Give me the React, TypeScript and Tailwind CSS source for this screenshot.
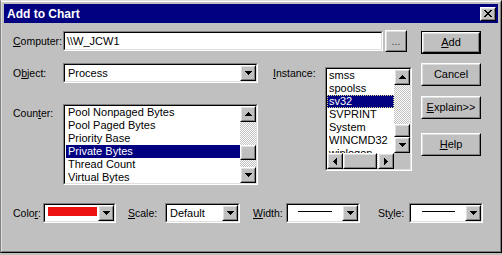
import React from "react";

const Down = () => (
  <svg width="7" height="4" viewBox="0 0 7 4" shapeRendering="crispEdges">
    <path d="M0 0h7v1H0z M1 1h5v1H1z M2 2h3v1H2z M3 3h1v1H3z" fill="#000" />
  </svg>
);
const Up = () => (
  <svg width="7" height="4" viewBox="0 0 7 4" shapeRendering="crispEdges">
    <path d="M3 0h1v1H3z M2 1h3v1H2z M1 2h5v1H1z M0 3h7v1H0z" fill="#000" />
  </svg>
);
const Left = () => (
  <svg width="4" height="7" viewBox="0 0 4 7" shapeRendering="crispEdges">
    <path d="M0 3h1v1H0z M1 2h1v3H1z M2 1h1v5H2z M3 0h1v7H3z" fill="#000" />
  </svg>
);
const Right = () => (
  <svg width="4" height="7" viewBox="0 0 4 7" shapeRendering="crispEdges">
    <path d="M0 0h1v7H0z M1 1h1v5H1z M2 2h1v3H2z M3 3h1v1H3z" fill="#000" />
  </svg>
);
const CloseX = () => (
  <svg width="8" height="7" viewBox="0 0 8 7" shapeRendering="crispEdges">
    <path
      d="M0 0h2v1H0z M6 0h2v1H6z M1 1h2v1H1z M5 1h2v1H5z M2 2h4v1H2z M3 3h2v1H3z M2 4h4v1H2z M1 5h2v1H1z M5 5h2v1H5z M0 6h2v1H0z M6 6h2v1H6z"
      fill="#000"
    />
  </svg>
);

type P = { className?: string; innerClassName?: string; children?: React.ReactNode };

function Raised({ className = "", innerClassName = "", children }: P) {
  return (
    <div className={`flex shrink-0 border border-t-white border-l-white border-r-black border-b-black bg-[#c0c0c0] ${className}`}>
      <div className={`flex flex-1 items-center justify-center border border-t-[#dfdfdf] border-l-[#dfdfdf] border-r-[#808080] border-b-[#808080] ${innerClassName}`}>
        {children}
      </div>
    </div>
  );
}

function Sunken({ className = "", innerClassName = "", children }: P) {
  return (
    <div className={`flex shrink-0 border border-t-[#808080] border-l-[#808080] border-r-white border-b-white ${className}`}>
      <div className={`flex flex-1 min-w-0 min-h-0 border border-t-black border-l-black border-r-[#dfdfdf] border-b-[#dfdfdf] bg-white ${innerClassName}`}>
        {children}
      </div>
    </div>
  );
}

function Combo({ className = "", contentClassName = "", children }: P & { contentClassName?: string }) {
  return (
    <Sunken className={className}>
      <div className={`flex flex-1 min-w-0 ${contentClassName}`}>{children}</div>
      <Raised className="w-[16px]">
        <Down />
      </Raised>
    </Sunken>
  );
}

function VScroll({ thumbClass }: { thumbClass: string }) {
  return (
    <div className="flex w-[16px] shrink-0 flex-col">
      <Raised className="h-[16px]">
        <Up />
      </Raised>
      <div className="flex flex-1 flex-col bg-[image:repeating-conic-gradient(#c0c0c0_0_25%,#ffffff_0_50%)] bg-[length:2px_2px]">
        <Raised className={thumbClass} />
      </div>
      <Raised className="h-[16px]">
        <Down />
      </Raised>
    </div>
  );
}

const U = ({ children }: { children: React.ReactNode }) => <span className="underline underline-offset-[1px]">{children}</span>;

const counters = ["Pool Nonpaged Bytes", "Pool Paged Bytes", "Priority Base", "Private Bytes", "Thread Count", "Virtual Bytes"];
const instances = ["smss", "spoolss", "sv32", "SVPRINT", "System", "WINCMD32", "winlogon"];

export default function App() {
  return (
    <div className="w-[502px] h-[255px] overflow-hidden bg-[#c0c0c0] font-['Liberation_Sans',Arial,sans-serif] text-[10.5px] leading-[13px] text-black">
      <div className="flex h-[253px] flex-col border border-t-[#dfdfdf] border-l-[#808080] border-r-black border-b-black">
        <div className="flex flex-1 flex-col border border-t-white border-l-[#dfdfdf] border-r-[#808080] border-b-[#808080] p-[2px]">
          {/* Title bar */}
          <div className="flex h-[19px] shrink-0 items-center justify-between bg-[#000080] pl-[3px] pr-[2px]">
            <span className="text-[12px] font-bold leading-none text-white">Add to Chart</span>
            <Raised className="h-[14px] w-[16px]">
              <CloseX />
            </Raised>
          </div>

          {/* Content */}
          <div className="flex flex-col pl-[8px] pt-[7px]">
            <div className="flex">
              {/* left column */}
              <div className="flex w-[400px] flex-col">
                <div className="flex h-[22px] items-center">
                  <span className="w-[51px] pl-[1px]">
                    <U>C</U>omputer:
                  </span>
                  <Sunken className="h-[20px] w-[320px]" innerClassName="items-center pl-[2px] text-[11px]">
                    {"\\\\W_JCW1"}
                  </Sunken>
                  <Raised className="ml-[2px] h-[22px] w-[22px]" innerClassName="items-end pb-[4px]">
                    <span className="leading-none text-[#404040]">...</span>
                  </Raised>
                </div>

                <div className="mt-[11px] flex">
                  <div className="flex w-[246px] flex-col">
                    <div className="flex h-[20px] items-center">
                      <span className="w-[51px] pl-[1px]">
                        O<U>b</U>ject:
                      </span>
                      <Combo className="h-[20px] w-[195px]" contentClassName="items-center pl-[3px] text-[11px]">
                        Process
                      </Combo>
                    </div>
                    <div className="mt-[21px] flex">
                      <span className="w-[51px] pl-[1px] pt-[3px]">
                        Coun<U>t</U>er:
                      </span>
                      <Sunken className="h-[81px] w-[195px]">
                        <div className="flex flex-1 flex-col overflow-hidden pl-[1px] text-[11px]">
                          {counters.map((c) => (
                            <div
                              key={c}
                              className={`h-[13px] shrink-0 whitespace-nowrap px-[2px] ${c === "Private Bytes" ? "bg-[#000080] text-white" : ""}`}
                            >
                              {c}
                            </div>
                          ))}
                        </div>
                        <VScroll thumbClass="mt-[23px] h-[15px]" />
                      </Sunken>
                    </div>
                  </div>

                  <div className="ml-[15px] flex">
                    <span className="flex h-[20px] w-[52px] items-center">
                      <U>I</U>nstance:
                    </span>
                    <Sunken className="mt-[4px] h-[104px] w-[87px]" innerClassName="flex-col">
                      <div className="flex min-h-0 flex-1">
                        <div className="flex min-w-0 flex-1 flex-col overflow-hidden text-[11px]">
                          {instances.map((c) =>
                            c === "sv32" ? (
                              <div
                                key={c}
                                className="h-[13px] shrink-0 whitespace-nowrap border border-dotted border-[#d8d890] bg-[#000080] pl-[1px] leading-[11px] text-white"
                              >
                                {c}
                              </div>
                            ) : (
                              <div key={c} className="h-[13px] shrink-0 whitespace-nowrap pl-[2px]">
                                {c}
                              </div>
                            )
                          )}
                        </div>
                        <VScroll thumbClass="mt-auto h-[13px]" />
                      </div>
                      <div className="flex h-[16px] shrink-0">
                        <Raised className="w-[16px]">
                          <Left />
                        </Raised>
                        <div className="flex flex-1 bg-[image:repeating-conic-gradient(#c0c0c0_0_25%,#ffffff_0_50%)] bg-[length:2px_2px]">
                          <Raised className="w-[34px]" />
                        </div>
                        <Raised className="w-[16px]">
                          <Right />
                        </Raised>
                        <div className="w-[16px] bg-[#c0c0c0]" />
                      </div>
                    </Sunken>
                  </div>
                </div>
              </div>

              {/* right column buttons */}
              <div className="ml-[9px] flex w-[60px] flex-col pt-[1px] text-[11px]">
                <div className="flex h-[23px] border border-black">
                  <Raised className="flex-1">
                    <span>
                      <U>A</U>dd
                    </span>
                  </Raised>
                </div>
                <Raised className="mt-[9px] h-[23px]">
                  <span>Cancel</span>
                </Raised>
                <Raised className="mt-[10px] h-[23px]">
                  <span>
                    <U>E</U>xplain&gt;&gt;
                  </span>
                </Raised>
                <Raised className="mt-[14px] h-[23px]">
                  <span>
                    <U>H</U>elp
                  </span>
                </Raised>
              </div>
            </div>

            {/* bottom row */}
            <div className="mt-[18px] flex h-[20px] items-center">
              <span className="w-[31px] pl-[1px]">
                Colo<U>r</U>:
              </span>
              <Combo className="h-[20px] w-[73px]" contentClassName="items-start pl-[3px] pt-[2px]">
                <div className="h-[9px] w-[49px] bg-[#ee1111]" />
              </Combo>
              <span className="ml-[12px] w-[37px]">
                <U>S</U>cale:
              </span>
              <Combo className="h-[20px] w-[75px]" contentClassName="items-center pl-[3px] text-[11px]">
                Default
              </Combo>
              <span className="ml-[13px] w-[33px]">
                <U>W</U>idth:
              </span>
              <Combo className="h-[20px] w-[74px]" contentClassName="items-start pl-[10px] pt-[6px]">
                <div className="h-[1px] w-[34px] bg-black" />
              </Combo>
              <span className="ml-[18px] w-[31px]">
                St<U>y</U>le:
              </span>
              <Combo className="h-[20px] w-[74px]" contentClassName="items-start pl-[11px] pt-[6px]">
                <div className="h-[1px] w-[33px] bg-black" />
              </Combo>
            </div>
          </div>
        </div>
      </div>
    </div>
  );
}
